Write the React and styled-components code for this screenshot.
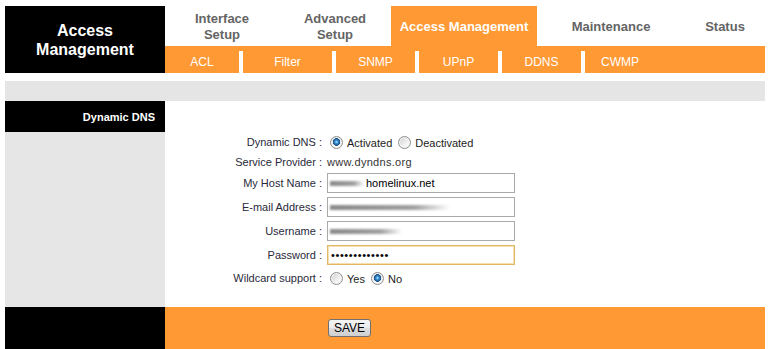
import React from "react";
import styled, { createGlobalStyle } from "styled-components";

const ORANGE = "#ff9933";

const Global = createGlobalStyle`
  html, body { margin: 0; padding: 0; background: #fff; }
  body { font-family: "Liberation Sans", Arial, sans-serif; }
  * { box-sizing: border-box; }
`;

const Page = styled.div`
  width: 765px;
  padding: 6px 0 0 5px;
`;

const Header = styled.div`
  display: flex;
  height: 67px;
`;

const Logo = styled.div`
  width: 160px;
  background: #000;
  color: #fff;
  font-weight: bold;
  font-size: 16px;
  line-height: 19px;
  display: flex;
  align-items: center;
  justify-content: center;
  text-align: center;
  padding-top: 1px;
`;

const Nav = styled.div`
  flex: 1;
  display: flex;
  flex-direction: column;
`;

const TopTabs = styled.div`
  display: flex;
  height: 40px;
`;

const TopTab = styled.div`
  width: ${(p) => p.$w}px;
  background: ${(p) => (p.$active ? ORANGE : "#fff")};
  color: ${(p) => (p.$active ? "#fff" : "#646464")};
  font-weight: bold;
  font-size: 13px;
  line-height: 16px;
  display: flex;
  align-items: center;
  justify-content: center;
  text-align: center;
  padding-top: 1px;
`;

const SubBar = styled.div`
  height: 27px;
  background: ${ORANGE};
  padding-top: 5px;
  display: flex;
`;

const SubTab = styled.div`
  width: ${(p) => p.$w}px;
  border-left: ${(p) => (p.$first ? "none" : "4px solid #fff")};
  color: #fff;
  font-size: 12px;
  display: flex;
  align-items: center;
  justify-content: center;
`;

const GreyBar = styled.div`
  margin-top: 8px;
  height: 20px;
  background: #e5e5e5;
`;

const Main = styled.div`
  display: flex;
  height: 206px;
`;

const Side = styled.div`
  width: 160px;
  background: #e6e6e6;
`;

const SideHead = styled.div`
  height: 31px;
  background: #000;
  color: #fff;
  font-weight: bold;
  font-size: 11px;
  display: flex;
  align-items: center;
  justify-content: flex-end;
  padding-right: 10px;
`;

const Content = styled.div`
  flex: 1;
  background: #fff;
  padding-top: 31px;
`;

const Row = styled.div`
  display: flex;
  align-items: center;
  height: ${(p) => p.$h}px;
`;

const Label = styled.div`
  width: 157px;
  text-align: right;
  font-size: 11px;
  color: #2a2a3a;
  margin-right: 5px;
  white-space: nowrap;
`;

const ValueText = styled.span`
  font-size: 11px;
  color: #333;
  letter-spacing: 0.3px;
`;

const RadioGroup = styled.div`
  display: flex;
  align-items: center;
  gap: 3px;
`;

const RadioLabel = styled.label`
  display: inline-flex;
  align-items: center;
  font-size: 11px;
  color: #222;
  padding-top: 2px;
`;

const Radio = styled.input.attrs({ type: "radio" })`
  appearance: none;
  -webkit-appearance: none;
  width: 13px;
  height: 13px;
  margin: -2px 4px 0 3px;
  border-radius: 50%;
  border: 1px solid #8e8f8f;
  background: ${(p) =>
    p.checked
      ? "radial-gradient(circle at 50% 45%, #bfe6ff 0, #3a93d6 1.5px, #1f5f9c 3px, #1a4a7a 3.6px, rgba(0,0,0,0) 4px), linear-gradient(#d6d6d6, #fbfbfb)"
      : "linear-gradient(135deg, #cfcfcf, #f6f6f6 70%)"};
  box-shadow: inset 0 0 0 1px #f4f4f4;
`;

const Field = styled.div`
  width: 188px;
  height: 20px;
  border: 1px solid ${(p) => (p.$focus ? "#e2b868" : "#a9a9a9")};
  box-shadow: ${(p) => (p.$focus ? "inset 0 0 0 1px #f6dfb0" : "none")};
  background: #fff;
  display: flex;
  align-items: center;
  padding-left: 2px;
  font-size: 11px;
  color: #000;
  overflow: hidden;
`;

const Smudge = styled.span`
  display: inline-block;
  width: ${(p) => p.$w}px;
  height: 5px;
  margin-right: 2px;
  background: linear-gradient(90deg, #8a8a8a, #a0a0a0 70%, rgba(200,200,200,0));
  filter: blur(1.2px);
  flex-shrink: 0;
`;

const Dots = styled.span`
  font-size: 11px;
  letter-spacing: 0.6px;
  padding-left: 1px;
`;

const Footer = styled.div`
  display: flex;
  height: 42px;
`;

const FootSide = styled.div`
  width: 160px;
  background: #000;
`;

const FootMain = styled.div`
  flex: 1;
  background: ${ORANGE};
  display: flex;
  align-items: center;
  padding-left: 163px;
`;

const SaveButton = styled.button`
  width: 43px;
  height: 18px;
  padding: 0;
  border: 1px solid #707070;
  border-radius: 3px;
  background: linear-gradient(#f4f4f4 0%, #ebebeb 50%, #dddddd 51%, #cfcfcf 100%);
  font-family: "Liberation Sans", Arial, sans-serif;
  font-size: 12px;
  color: #000;
`;

const topTabs = [
  { w: 114, label: ["Interface", "Setup"] },
  { w: 112, label: ["Advanced", "Setup"] },
  { w: 146, label: ["Access Management"], active: true },
  { w: 148, label: ["Maintenance"] },
  { w: 80, label: ["Status"] },
];

const subTabs = [
  { w: 74, label: "ACL" },
  { w: 93, label: "Filter" },
  { w: 83, label: "SNMP" },
  { w: 83, label: "UPnP" },
  { w: 83, label: "DDNS" },
  { w: 74, label: "CWMP" },
];

export default function App() {
  return (
    <>
      <Global />
      <Page>
        <Header>
          <Logo>
            Access
            <br />
            Management
          </Logo>
          <Nav>
            <TopTabs>
              {topTabs.map((t, i) => (
                <TopTab key={i} $w={t.w} $active={t.active}>
                  <span>
                    {t.label.map((l, j) => (
                      <React.Fragment key={j}>
                        {j > 0 && <br />}
                        {l}
                      </React.Fragment>
                    ))}
                  </span>
                </TopTab>
              ))}
            </TopTabs>
            <SubBar>
              {subTabs.map((s, i) => (
                <SubTab key={s.label} $w={s.w} $first={i === 0}>
                  {s.label}
                </SubTab>
              ))}
            </SubBar>
          </Nav>
        </Header>
        <GreyBar />
        <Main>
          <Side>
            <SideHead>Dynamic DNS</SideHead>
          </Side>
          <Content>
            <Row $h={20}>
              <Label>Dynamic DNS :</Label>
              <RadioGroup>
                <RadioLabel>
                  <Radio name="ddns" checked readOnly />
                  Activated
                </RadioLabel>
                <RadioLabel>
                  <Radio name="ddns" checked={false} readOnly />
                  Deactivated
                </RadioLabel>
              </RadioGroup>
            </Row>
            <Row $h={19}>
              <Label>Service Provider :</Label>
              <ValueText>www.dyndns.org</ValueText>
            </Row>
            <Row $h={24}>
              <Label>My Host Name :</Label>
              <Field>
                <Smudge $w={34} />
                <span>homelinux.net</span>
              </Field>
            </Row>
            <Row $h={24}>
              <Label>E-mail Address :</Label>
              <Field>
                <Smudge $w={120} />
              </Field>
            </Row>
            <Row $h={24}>
              <Label>Username :</Label>
              <Field>
                <Smudge $w={72} />
              </Field>
            </Row>
            <Row $h={24}>
              <Label>Password :</Label>
              <Field $focus>
                <Dots>•••••••••••••</Dots>
              </Field>
            </Row>
            <Row $h={22}>
              <Label>Wildcard support :</Label>
              <RadioGroup>
                <RadioLabel>
                  <Radio name="wild" checked={false} readOnly />
                  Yes
                </RadioLabel>
                <RadioLabel>
                  <Radio name="wild" checked readOnly />
                  No
                </RadioLabel>
              </RadioGroup>
            </Row>
          </Content>
        </Main>
        <Footer>
          <FootSide />
          <FootMain>
            <SaveButton>SAVE</SaveButton>
          </FootMain>
        </Footer>
      </Page>
    </>
  );
}
